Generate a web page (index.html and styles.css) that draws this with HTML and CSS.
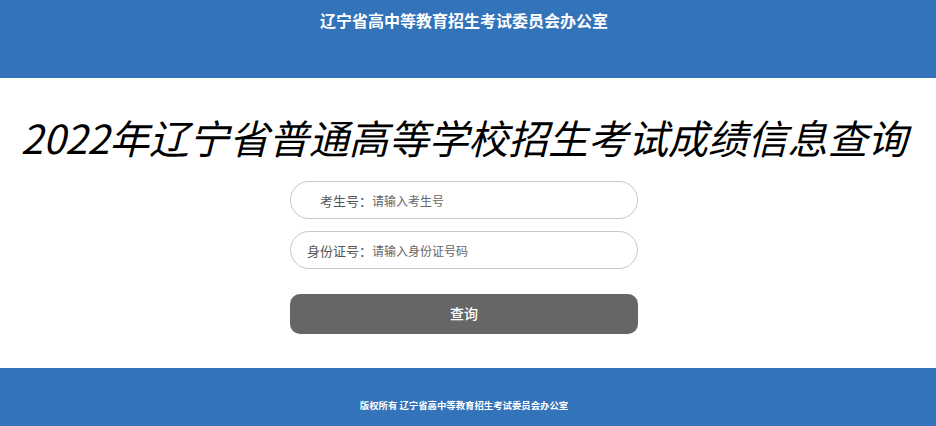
FILE: index.html
```html
<!DOCTYPE html>
<html lang="zh-CN">
<head>
<meta charset="utf-8">
<title>2022年辽宁省普通高等学校招生考试成绩信息查询</title>
<link rel="stylesheet" href="styles.css">
</head>
<body>
<header class="top">
  <div class="top-title">辽宁省高中等教育招生考试委员会办公室</div>
</header>
<main class="main">
  <h1 class="title">2022年辽宁省普通高等学校招生考试成绩信息查询</h1>
  <form class="form">
    <label class="field">
      <span class="label">考生号：</span>
      <input class="input" type="text" placeholder="请输入考生号">
    </label>
    <label class="field">
      <span class="label">身份证号：</span>
      <input class="input" type="text" placeholder="请输入身份证号码">
    </label>
    <button class="btn" type="button">查询</button>
  </form>
</main>
<footer class="foot">版权所有 辽宁省高中等教育招生考试委员会办公室</footer>
</body>
</html>
```
FILE: styles.css
```css
html, body {
  margin: 0;
  padding: 0;
}
body {
  width: 936px;
  height: 426px;
  overflow: hidden;
  font-family: "Noto Sans CJK SC", "Noto Sans", sans-serif;
  background: #fff;
}
.top {
  box-sizing: border-box;
  height: 78px;
  background: #3373ba;
  display: flex;
  justify-content: center;
  padding-right: 8px;
}
.top-title {
  margin-top: 8px;
  color: #fff;
  font-size: 16px;
  font-weight: bold;
  line-height: 24px;
}
.main {
  box-sizing: border-box;
  height: 290px;
  display: flex;
  flex-direction: column;
  align-items: center;
  padding-right: 8px;
}
.title {
  margin: 31px 0 0;
  font-size: 40px;
  font-style: italic;
  font-weight: normal;
  line-height: 56px;
  color: #000;
  white-space: nowrap;
  letter-spacing: -0.1px;
}
.form {
  margin-top: 16px;
  width: 348px;
  display: flex;
  flex-direction: column;
}
.field {
  box-sizing: border-box;
  height: 38px;
  border: 1px solid #c8c8c8;
  border-radius: 19px;
  display: flex;
  align-items: center;
  margin-bottom: 12px;
}
.label {
  width: 81px;
  text-align: right;
  font-size: 13px;
  color: #555;
  flex: none;
}
.input {
  flex: 1;
  border: none;
  outline: none;
  background: transparent;
  font-family: inherit;
  font-size: 12px;
  padding: 0;
  margin-left: 0;
}
.input::placeholder {
  color: #666;
}
.btn {
  margin-top: 13px;
  height: 40px;
  border: none;
  border-radius: 10px;
  background: #666;
  color: #fff;
  font-family: inherit;
  font-size: 14px;
  font-weight: 500;
  padding: 0 0 3px;
}
.foot {
  height: 58px;
  background: #3373ba;
  color: #fff;
  font-size: 9.4px;
  font-weight: bold;
  display: flex;
  justify-content: center;
  align-items: center;
  padding-top: 16px;
  padding-right: 8px;
  box-sizing: border-box;
}
```
